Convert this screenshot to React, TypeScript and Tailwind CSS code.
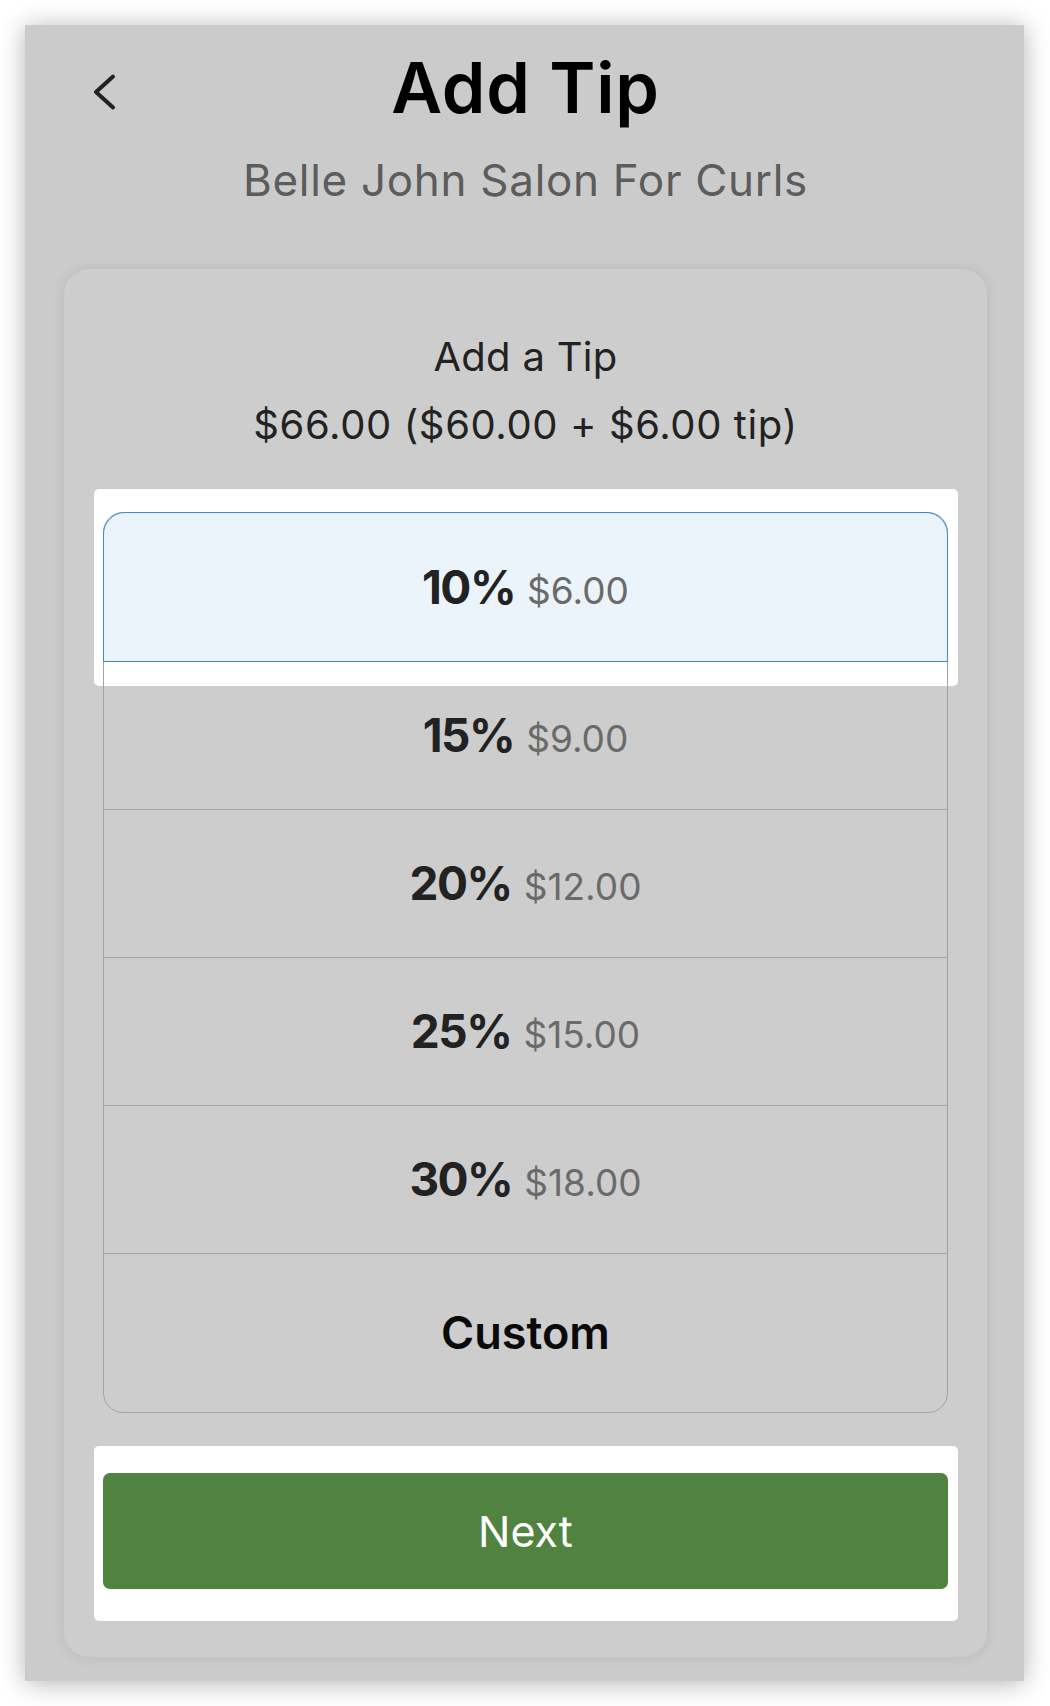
import React from "react";

const rows = [
  { pct: "15%", amt: "$9.00" },
  { pct: "20%", amt: "$12.00" },
  { pct: "25%", amt: "$15.00" },
  { pct: "30%", amt: "$18.00" },
];

function TipLabel({ pct, amt }: { pct: string; amt: string }) {
  return (
    <div className="flex items-baseline gap-[12px] proportional-nums">
      <span className="text-[46px] font-bold tracking-[-1.5px] text-[#222222]">{pct}</span>
      <span className="text-[37px] font-normal text-[#6a6a6a]">{amt}</span>
    </div>
  );
}

export default function App() {
  return (
    <div className="w-[1050px] bg-white p-[25px]" style={{ fontFamily: "Inter, 'Noto Sans', sans-serif" }}>
      <div className="flex h-[1656px] w-[999px] flex-col bg-[#cbcbcb] pb-[24px] pl-[39px] pr-[37px] pt-[23px] shadow-[0_2px_24px_rgba(0,0,0,0.3)]">
        {/* Header */}
        <div className="grid grid-cols-[1fr_auto_1fr]">
          <div className="pl-[28px] pt-[26px]">
            <svg width="24" height="36" viewBox="0 0 24 36" fill="none">
              <polyline
                points="21,2.5 4,18 21,33.5"
                stroke="#222222"
                strokeWidth="4"
                strokeLinecap="round"
                strokeLinejoin="round"
              />
            </svg>
          </div>
          <h1 className="text-center text-[70px] font-semibold leading-[80px] tracking-[0.8px] text-black">Add Tip</h1>
          <div />
        </div>
        <p className="mt-[26px] text-center text-[44px] leading-[52px] tracking-[0.7px] text-[#5c5c5c]">
          Belle John Salon For Curls
        </p>

        {/* Card */}
        <div className="mt-[63px] flex flex-1 flex-col rounded-[25px] bg-[#cdcdcd] px-[39px] pb-[36px] pt-[54px] shadow-[0_0_14px_rgba(0,0,0,0.09)]">
          <div className="text-center text-[#222222]">
            <p className="text-[40px] leading-[68px] tracking-[0.3px]">Add a Tip</p>
            <p className="text-[40px] leading-[68px] tracking-[0.6px]">$66.00 ($60.00 + $6.00 tip)</p>
          </div>

          <div className="relative mt-[53px]">
            <div className="absolute -left-[9px] -right-[10px] -top-[23px] h-[197px] rounded-[5px] bg-white" />
            <div className="relative flex flex-col rounded-[20px] border border-[#a3a3a3]">
              <div className="-mx-px -mt-px flex h-[150px] items-center justify-center rounded-t-[22px] border border-[#3f88d8] bg-[#ebf3fb]">
                <TipLabel pct="10%" amt="$6.00" />
              </div>
              {rows.map((r) => (
                <div
                  key={r.pct}
                  className="flex h-[148px] items-center justify-center border-b border-[#a3a3a3]"
                >
                  <TipLabel pct={r.pct} amt={r.amt} />
                </div>
              ))}
              <div className="flex h-[158px] items-center justify-center">
                <span className="text-[45px] font-semibold text-[#0a0a0a]">Custom</span>
              </div>
            </div>
          </div>

          <div className="-ml-[9px] -mr-[10px] mt-[33px] rounded-[5px] bg-white pb-[32px] pl-[9px] pr-[10px] pt-[27px]">
            <button className="flex h-[116px] w-full items-center justify-center rounded-[7px] bg-[#508340] text-[43px] font-normal text-white">
              Next
            </button>
          </div>
        </div>
      </div>
    </div>
  );
}
